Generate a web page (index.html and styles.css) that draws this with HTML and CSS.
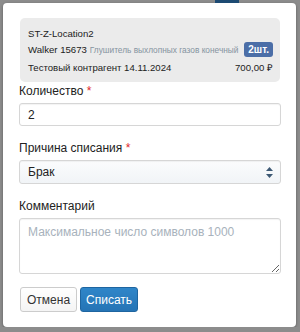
FILE: index.html
```html
<!DOCTYPE html>
<html lang="ru">
<head>
    <meta charset="UTF-8">
    <meta name="viewport" content="width=device-width, initial-scale=1.0">
    <title>Списание</title>
    <link rel="stylesheet" href="styles.css">
</head>
<body>
    <div class="backdrop-strip">
        <span class="backdrop-tab"></span>
    </div>
    <div class="modal">
        <div class="item-card">
            <div class="item-row">ST-Z-Location2</div>
            <div class="item-row item-row-product">
                <span class="item-code">Walker 15673</span>
                <span class="item-name">Глушитель выхлопных газов конечный</span>
                <span class="qty-badge">2шт.</span>
            </div>
            <div class="item-row item-row-bottom">
                <span>Тестовый контрагент 14.11.2024</span>
                <span>700,00 ₽</span>
            </div>
        </div>

        <label class="field-label" for="qty">Количество <span class="req">*</span></label>
        <input class="field-input" id="qty" type="text" value="2">

        <label class="field-label" for="reason">Причина списания <span class="req">*</span></label>
        <div class="select-wrap">
            <select class="field-input field-select" id="reason">
                <option selected>Брак</option>
            </select>
            <svg class="select-arrows" width="7" height="11" viewBox="0 0 7 11">
                <path d="M3.5 0 L7 4 L0 4 Z M3.5 11 L7 7 L0 7 Z" fill="#3d5874"/>
            </svg>
        </div>

        <label class="field-label" for="comment">Комментарий</label>
        <textarea class="field-input field-textarea" id="comment" placeholder="Максимальное число символов 1000"></textarea>

        <div class="actions">
            <button class="btn btn-cancel">Отмена</button>
            <button class="btn btn-primary">Списать</button>
        </div>
    </div>
</body>
</html>
```

FILE: styles.css
```css
body {
    margin: 0;
    padding: 0;
    background-color: #8c8c8c;
    font-family: "Liberation Sans", Arial, sans-serif;
    color: #222;
}

.backdrop-strip {
    height: 3px;
    display: flex;
}
.backdrop-tab {
    display: block;
    flex: 0 0 24px;
    height: 3px;
    margin-left: 215px;
    background-color: #1d4a72;
}

.modal {
    width: 293px;
    height: 324px;
    margin-left: 3px;
    box-sizing: border-box;
    padding: 15px 15px 15px 16px;
    background-color: #fff;
    border-radius: 4px;
    box-shadow: 0 1px 3px rgba(0, 0, 0, 0.35);
    display: flex;
    flex-direction: column;
}

.item-card {
    margin: 0 1px 0 1px;
    padding: 9px 7px 7px 8px;
    background-color: #ebebeb;
    border-radius: 5px;
    font-size: 9.6px;
}
.item-row {
    line-height: 14px;
    white-space: nowrap;
}
.item-row-product {
    display: flex;
    align-items: center;
    margin-top: 1px;
}
.item-name {
    margin-left: 3px;
    margin-right: auto;
    font-size: 8.3px;
    color: #8593a0;
}
.qty-badge {
    background-color: #4b6ea7;
    color: #fff;
    font-weight: bold;
    font-size: 10px;
    line-height: 15px;
    padding: 0 4px;
    border-radius: 3px;
}
.item-row-bottom {
    display: flex;
    justify-content: space-between;
    margin-top: 4px;
}

.field-label {
    font-size: 12px;
    line-height: 14px;
    margin: 2px 0 5px 0;
    color: #222;
}
.field-label + .field-input,
.field-label + .select-wrap {
    margin-bottom: 13px;
}
.req {
    color: #e0262b;
}

.field-input {
    box-sizing: border-box;
    width: 262px;
    height: 24px;
    padding: 0 8px;
    font-family: "Liberation Sans", Arial, sans-serif;
    font-size: 12px;
    color: #222;
    border: 1px solid #d6d6d6;
    border-radius: 3px;
    box-shadow: inset 0 1px 1px rgba(0, 0, 0, 0.05);
    background-color: #fff;
    outline: none;
}

.select-wrap {
    display: flex;
    align-items: center;
    width: 262px;
}
.field-select {
    appearance: none;
    -webkit-appearance: none;
    background: linear-gradient(#fbfcfd, #f1f4f7);
}
.select-arrows {
    margin-left: -15px;
}

.field-textarea {
    height: 58px;
    padding: 6px 8px;
    resize: vertical;
    margin-bottom: 13px;
}
.field-textarea::placeholder {
    color: #a8b2bc;
}

.actions {
    display: flex;
    gap: 3px;
    margin-left: 1px;
}
.btn {
    height: 25px;
    padding: 0 6px;
    font-family: "Liberation Sans", Arial, sans-serif;
    font-size: 12px;
    border-radius: 3px;
    border: 1px solid #ccc;
}
.btn-cancel {
    background: linear-gradient(#fff, #f4f4f4);
    color: #333;
}
.btn-primary {
    background: linear-gradient(#2f86c9, #2574b5);
    border-color: #1e65a0;
    color: #fff;
    padding: 0 5px;
}
```
